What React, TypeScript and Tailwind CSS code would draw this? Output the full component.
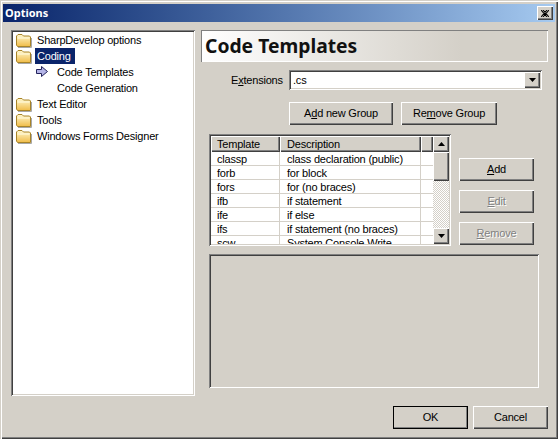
const raised = "shadow-[inset_1px_1px_0_#ffffff,inset_-1px_-1px_0_#404040,inset_-2px_-2px_0_#808080]";
const sunken = "shadow-[inset_1px_1px_0_#808080,inset_-1px_-1px_0_#ffffff,inset_2px_2px_0_#404040,inset_-2px_-2px_0_#d4d0c8]";
const font = "font-['Liberation_Sans','Arial',sans-serif]";
const boldFont = "font-['Noto_Sans','DejaVu_Sans',sans-serif] tracking-normal";

function Folder() {
    return (
        <svg width="16" height="16" viewBox="0 0 16 16" className="shrink-0">
            <defs>
                <linearGradient id="fold" x1="0" y1="0" x2="0" y2="1">
                    <stop offset="0" stopColor="#fff8d0" />
                    <stop offset="1" stopColor="#f0bc48" />
                </linearGradient>
            </defs>
            <path d="M2 15.5H15.5V6" fill="none" stroke="#a8a8a8" />
            <path d="M0.5 13V4L2 2.5H6L7.5 4H13.5L14.5 5V14.5H1.5Z" fill="url(#fold)" stroke="#a88428" />
            <path d="M1.5 6H13.5" stroke="#fffbe0" />
        </svg>
    );
}

function Arrow() {
    return (
        <svg width="12" height="12" viewBox="0 0 12 12" className="shrink-0">
            <path d="M0.5 3.5H5.5V0.5L11.5 5.5L5.5 10.5V7.5H0.5Z" fill="#b4b4e6" stroke="#24245c" />
        </svg>
    );
}

function Tri({ up }: { up?: boolean }) {
    return (
        <svg width="7" height="4" viewBox="0 0 7 4">
            <path d={up ? "M3.5 0L7 4H0Z" : "M0 0H7L3.5 4Z"} fill="#000" />
        </svg>
    );
}

function Btn({ label, u, disabled, w = "w-[75px]", isDefault }: { label: [string, string, string]; u?: boolean; disabled?: boolean; w?: string; isDefault?: boolean }) {
    return (
        <div className={`${w} h-[23px] flex items-center justify-center bg-[#d4d0c8] text-[11px] ${raised} ${disabled ? "text-[#808080] [text-shadow:1px_1px_0_#fff]" : "text-black"} ${isDefault ? "outline outline-1 -outline-offset-1 outline-black" : ""}`}>
            <span>
                {label[0]}
                {u ? <span className="underline">{label[1]}</span> : label[1]}
                {label[2]}
            </span>
        </div>
    );
}

const rows = [
    ["classp", "class declaration (public)"],
    ["forb", "for block"],
    ["fors", "for (no braces)"],
    ["ifb", "if statement"],
    ["ife", "if else"],
    ["ifs", "if statement (no braces)"],
    ["scw", "System.Console.Write"],
];

export default function App() {
    return (
        <div className={`${font} w-[558px] h-[439px] flex flex-col bg-[#d4d0c8] text-black text-[11px] tracking-[-0.2px] overflow-hidden shadow-[inset_1px_1px_0_#d4d0c8,inset_2px_2px_0_#ffffff,inset_-1px_-1px_0_#404040,inset_-2px_-2px_0_#808080] p-[3px]`}>
            <div className="h-[18px] mt-[1px] flex items-center justify-between pl-[2px] pr-[2px] bg-gradient-to-r from-[#0a246a] to-[#a6caf0]">
                <span className={`${boldFont} font-bold text-white text-[11px]`}>Options</span>
                <div className={`w-[16px] h-[14px] flex items-center justify-center bg-[#d4d0c8] ${raised}`}>
                    <svg width="8" height="7" viewBox="0 0 8 7">
                        <path d="M0 0L6 7M2 0L8 7M6 0L0 7M8 0L2 7" stroke="#000" strokeWidth="1.1" fill="none" />
                    </svg>
                </div>
            </div>

            <div className="flex flex-1 pt-[8px] pl-[8px] pr-[7px]">
                <div className={`w-[184px] h-[366px] bg-white p-[2px] ${sunken}`}>
                    <TreeRow label="SharpDevelop options" />
                    <TreeRow label="Coding" selected />
                    <div className="h-[16px] flex items-center pl-[23px] gap-[9px]">
                        <Arrow />
                        <span>Code Templates</span>
                    </div>
                    <div className="h-[16px] flex items-center pl-[44px]">Code Generation</div>
                    <TreeRow label="Text Editor" />
                    <TreeRow label="Tools" />
                    <TreeRow label="Windows Forms Designer" />
                </div>

                <div className="ml-[6px] flex-1 flex flex-col">
                    <div className={`${boldFont} h-[32px] flex items-center pl-[4px] bg-gradient-to-r from-white to-[#d4d0c8] to-[75%] text-[19.3px] font-bold text-[#111] shadow-[inset_1px_1px_0_#808080,inset_-1px_-1px_0_#ffffff]`}>
                        Code Templates
                    </div>

                    <div className="mt-[8px] flex items-center pl-[30px]">
                        <span className="w-[58px]">
                            E<span className="underline">x</span>tensions
                        </span>
                        <div className={`w-[253px] h-[20px] flex items-center justify-between bg-white p-[2px] ${sunken}`}>
                            <span className="pl-[2px]">.cs</span>
                            <div className={`w-[16px] h-[16px] flex items-center justify-center bg-[#d4d0c8] ${raised}`}>
                                <Tri />
                            </div>
                        </div>
                    </div>

                    <div className="mt-[12px] flex pl-[88px] gap-[8px]">
                        <Btn label={["A", "d", "d new Group"]} u w="w-[104px]" />
                        <Btn label={["Re", "m", "ove Group"]} u w="w-[96px]" />
                    </div>

                    <div className="mt-[9px] flex pl-[8px]">
                        <div className={`w-[242px] h-[112px] bg-white p-[2px] overflow-hidden flex ${sunken}`}>
                            <div className="flex-1 min-w-0 flex flex-col overflow-hidden">
                                <div className="h-[16px] shrink-0 flex">
                                    <div className={`w-[69px] flex items-center pl-[6px] bg-[#d4d0c8] ${raised}`}>Template</div>
                                    <div className={`w-[141px] flex items-center pl-[7px] bg-[#d4d0c8] ${raised}`}>Description</div>
                                    <div className={`flex-1 bg-[#d4d0c8] ${raised}`} />
                                </div>
                                {rows.map(r => (
                                    <div key={r[0]} className="h-[14px] shrink-0 flex border-b border-[#d4d0c8] leading-[14px]">
                                        <div className="w-[69px] pl-[6px] border-r border-[#d4d0c8]">{r[0]}</div>
                                        <div className="w-[141px] pl-[7px] border-r border-[#d4d0c8] whitespace-nowrap">{r[1]}</div>
                                    </div>
                                ))}
                            </div>
                            <div className="w-[16px] shrink-0 flex flex-col bg-[repeating-conic-gradient(#d4d0c8_0_25%,#ffffff_0_50%)] bg-[length:2px_2px]">
                                <div className={`h-[16px] flex items-center justify-center bg-[#d4d0c8] ${raised}`}>
                                    <Tri up />
                                </div>
                                <div className={`h-[29px] bg-[#d4d0c8] ${raised}`} />
                                <div className="flex-1" />
                                <div className={`h-[16px] flex items-center justify-center bg-[#d4d0c8] ${raised}`}>
                                    <Tri />
                                </div>
                            </div>
                        </div>
                        <div className="ml-[8px] mt-[24px] flex flex-col gap-[9px]">
                            <Btn label={["", "A", "dd"]} u />
                            <Btn label={["", "E", "dit"]} u disabled />
                            <Btn label={["", "R", "emove"]} u disabled />
                        </div>
                    </div>

                    <div className="mt-[8px] ml-[8px] w-[330px] h-[134px] shadow-[inset_1px_1px_0_#808080,inset_-1px_-1px_0_#ffffff,inset_2px_2px_0_#404040]" />

                    <div className="mt-[18px] flex justify-end gap-[5px]">
                        <Btn label={["OK", "", ""]} isDefault />
                        <Btn label={["Cancel", "", ""]} />
                    </div>
                </div>
            </div>
        </div>
    );
}

function TreeRow({ label, selected }: { label: string; selected?: boolean }) {
    return (
        <div className="h-[16px] flex items-center pl-[3px]">
            <Folder />
            <span className={`ml-[3px] pl-[2px] pr-[4px] h-[16px] leading-[16px] ${selected ? "bg-[#0a246a] text-white" : ""}`}>{label}</span>
        </div>
    );
}
